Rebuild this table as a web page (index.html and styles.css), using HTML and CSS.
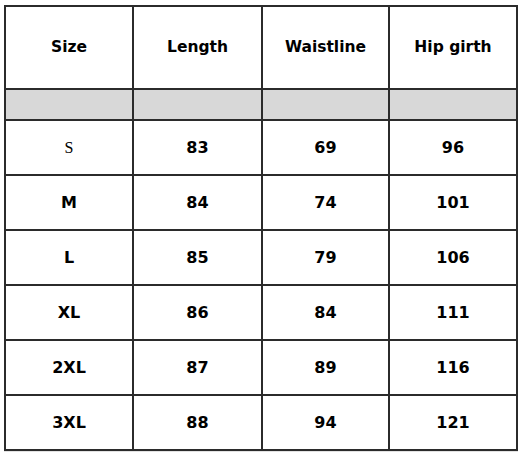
FILE: index.html
```html
<!DOCTYPE html>
<html>
<head>
<meta charset="utf-8">
<link rel="stylesheet" href="styles.css">
</head>
<body>
<div class="chart">
  <div class="cell head">Size</div>
  <div class="cell head">Length</div>
  <div class="cell head">Waistline</div>
  <div class="cell head">Hip girth</div>

  <div class="cell grey"></div>
  <div class="cell grey"></div>
  <div class="cell grey"></div>
  <div class="cell grey"></div>

  <div class="cell serif">S</div>
  <div class="cell">83</div>
  <div class="cell">69</div>
  <div class="cell">96</div>

  <div class="cell">M</div>
  <div class="cell">84</div>
  <div class="cell">74</div>
  <div class="cell">101</div>

  <div class="cell">L</div>
  <div class="cell">85</div>
  <div class="cell">79</div>
  <div class="cell">106</div>

  <div class="cell">XL</div>
  <div class="cell">86</div>
  <div class="cell">84</div>
  <div class="cell">111</div>

  <div class="cell">2XL</div>
  <div class="cell">87</div>
  <div class="cell">89</div>
  <div class="cell">116</div>

  <div class="cell">3XL</div>
  <div class="cell">88</div>
  <div class="cell">94</div>
  <div class="cell">121</div>
</div>
</body>
</html>
```

FILE: styles.css
```css
html, body {
  margin: 0;
  padding: 0;
  background: #ffffff;
}

body {
  padding: 5px 0 0 4px;
}

.chart {
  width: 510px;
  display: grid;
  grid-template-columns: 126px 127px 125px 126px;
  grid-template-rows: 81px 29px repeat(6, 53px);
  gap: 2px;
  padding: 2px;
  background: #2b2b2b;
  border-bottom: 1px solid #e2e2e2;
  font-family: "Comic Sans MS", "DejaVu Sans", sans-serif;
  font-weight: bold;
  font-size: 16px;
  color: #000;
}

.cell {
  background: #ffffff;
  display: flex;
  align-items: center;
  justify-content: center;
}

.head {
  font-size: 15.5px;
  padding-bottom: 2px;
}

.grey {
  background: #d8d8d8;
}

.serif {
  font-family: "Liberation Serif", serif;
  font-weight: normal;
  font-size: 16px;
}
```
